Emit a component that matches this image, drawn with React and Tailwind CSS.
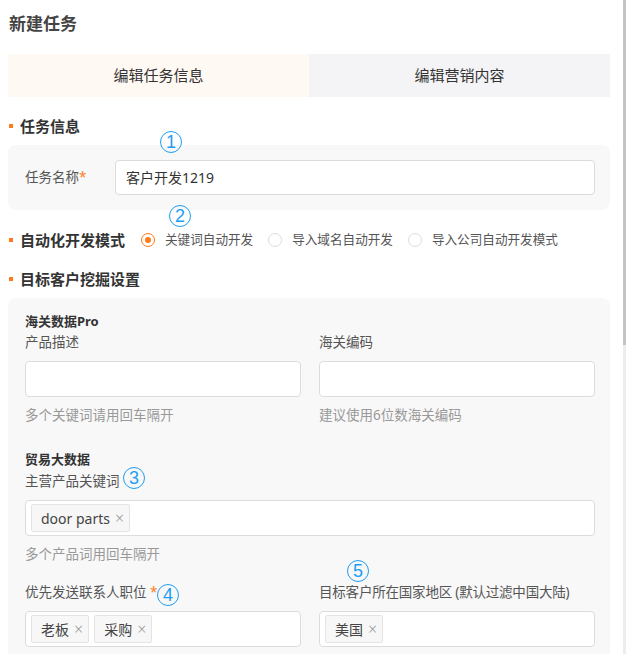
import React from "react";

const FONT = { fontFamily: '"Noto Sans", "Noto Sans CJK SC", sans-serif' };

function Num({ n, cls }) {
  return (
    <div
      className={`absolute ${cls} w-[22px] h-[22px] rounded-full border-[1.7px] border-[#1e9ef4] flex items-center justify-center text-[#1e9ef4] text-[18px] leading-none`}
      style={{ fontFamily: '"Liberation Sans", "DejaVu Sans", sans-serif' }}
    >
      {n}
    </div>
  );
}

function SectionHead({ children, className = "" }) {
  return (
    <div className={`flex items-center h-[20px] ${className}`}>
      <span className="w-[4px] h-[4px] bg-[#ff7a18] ml-[1px] mr-[7px]" />
      <span className="text-[15px] font-bold text-[#333]">{children}</span>
    </div>
  );
}

function Tag({ children }) {
  return (
    <span className="inline-flex items-center h-[28px] pl-[9px] pr-[5px] bg-[#f7f7f7] border border-[#e4e4e4] rounded-[2px] text-[14px] text-[#444]">
      {children}
      <span className="ml-[5px] text-[#999] text-[16px] font-light leading-none">×</span>
    </span>
  );
}

function Radio({ checked, label }) {
  return (
    <div className="flex items-center">
      {checked ? (
        <span className="w-[14px] h-[14px] rounded-full border border-[#ff7a18] flex items-center justify-center">
          <span className="w-[6px] h-[6px] rounded-full bg-[#ff7a18]" />
        </span>
      ) : (
        <span className="w-[14px] h-[14px] rounded-full border border-[#dcdcdc] bg-white" />
      )}
      <span className="ml-[10px] text-[12.6px] text-[#555]">{label}</span>
    </div>
  );
}

export default function App() {
  return (
    <div className="relative flex w-[626px] h-[654px] overflow-hidden bg-white" style={FONT}>
      <div className="w-[622px] pl-[8px] pr-[12px] pt-[12px]">
        <div className="h-[24px] leading-[24px] text-[17px] font-bold text-[#444] pl-[1px]">新建任务</div>

        <div className="mt-[18px] flex h-[43px]">
          <div className="flex-1 bg-[#fff9f3] flex items-center justify-center text-[15px] text-[#333]">编辑任务信息</div>
          <div className="flex-1 bg-[#f4f4f6] flex items-center justify-center text-[15px] text-[#333]">编辑营销内容</div>
        </div>

        <SectionHead className="mt-[19px]">任务信息</SectionHead>

        <div className="mt-[9px] h-[65px] bg-[#f8f8f8] rounded-[8px] flex items-center pl-[17px] pr-[15px]">
          <div className="w-[90px] text-[13.5px] text-[#555]">
            任务名称<span className="text-[#ff7a18]">*</span>
          </div>
          <div className="flex-1 h-[35px] bg-white border border-[#dcdcdc] rounded-[4px] flex items-center pl-[10px] text-[14px] text-[#333]">
            客户开发1219
          </div>
        </div>

        <div className="mt-[20px] flex items-center h-[20px]">
          <span className="w-[4px] h-[4px] bg-[#ff7a18] ml-[1px] mr-[7px]" />
          <span className="text-[15px] font-bold text-[#333] mr-[16px]">自动化开发模式</span>
          <div className="flex items-center gap-[15px]">
            <Radio checked label="关键词自动开发" />
            <Radio label="导入域名自动开发" />
            <Radio label="导入公司自动开发模式" />
          </div>
        </div>

        <SectionHead className="mt-[19px]">目标客户挖掘设置</SectionHead>

        <div className="mt-[9px] bg-[#f8f8f8] rounded-t-[8px] pl-[17px] pr-[15px] pt-[13px] pb-[20px]">
          <div className="h-[20px] leading-[20px] text-[13px] font-bold text-[#333]">海关数据Pro</div>
          <div className="mt-[1px] grid grid-cols-2 gap-x-[18px]">
            <div>
              <div className="h-[20px] leading-[20px] text-[13.5px] text-[#555]">产品描述</div>
              <div className="mt-[9px] h-[36px] bg-white border border-[#dcdcdc] rounded-[4px]" />
              <div className="mt-[8px] h-[20px] leading-[20px] text-[13.5px] text-[#999]">多个关键词请用回车隔开</div>
            </div>
            <div>
              <div className="h-[20px] leading-[20px] text-[13.5px] text-[#555]">海关编码</div>
              <div className="mt-[9px] h-[36px] bg-white border border-[#dcdcdc] rounded-[4px]" />
              <div className="mt-[8px] h-[20px] leading-[20px] text-[13.5px] text-[#999]">建议使用6位数海关编码</div>
            </div>
          </div>

          <div className="mt-[24px] h-[20px] leading-[20px] text-[13px] font-bold text-[#333]">贸易大数据</div>
          <div className="mt-[2px] h-[20px] leading-[20px] text-[13.5px] text-[#555]">主营产品关键词</div>
          <div className="mt-[9px] h-[36px] bg-white border border-[#dcdcdc] rounded-[4px] flex items-center pl-[5px]">
            <Tag>door parts</Tag>
          </div>
          <div className="mt-[8px] h-[20px] leading-[20px] text-[13.5px] text-[#999]">多个产品词用回车隔开</div>

          <div className="mt-[18px] grid grid-cols-2 gap-x-[18px]">
            <div>
              <div className="h-[20px] leading-[20px] text-[13.5px] text-[#555]">
                优先发送联系人职位 <span className="text-[#ff7a18]">*</span>
              </div>
              <div className="mt-[9px] h-[36px] bg-white border border-[#dcdcdc] rounded-[4px] flex items-center pl-[5px] gap-[5px]">
                <Tag>老板</Tag>
                <Tag>采购</Tag>
              </div>
            </div>
            <div>
              <div className="h-[20px] leading-[20px] text-[13.5px] text-[#555] tracking-[-0.2px]">目标客户所在国家地区 (默认过滤中国大陆)</div>
              <div className="mt-[9px] h-[36px] bg-white border border-[#dcdcdc] rounded-[4px] flex items-center pl-[5px]">
                <Tag>美国</Tag>
              </div>
            </div>
          </div>
        </div>
      </div>

      <div className="w-[4px] h-full bg-white">
        <div className="ml-[1px] w-[3px] h-[345px] bg-[#c4c4c4]" />
        <div className="ml-[1px] w-[3px] h-[309px] bg-[#ededed]" />
      </div>

      <Num n="1" cls="left-[160px] top-[131px]" />
      <Num n="2" cls="left-[169px] top-[205px]" />
      <Num n="3" cls="left-[123px] top-[467px]" />
      <Num n="4" cls="left-[157px] top-[584px]" />
      <Num n="5" cls="left-[347px] top-[560px]" />
    </div>
  );
}
